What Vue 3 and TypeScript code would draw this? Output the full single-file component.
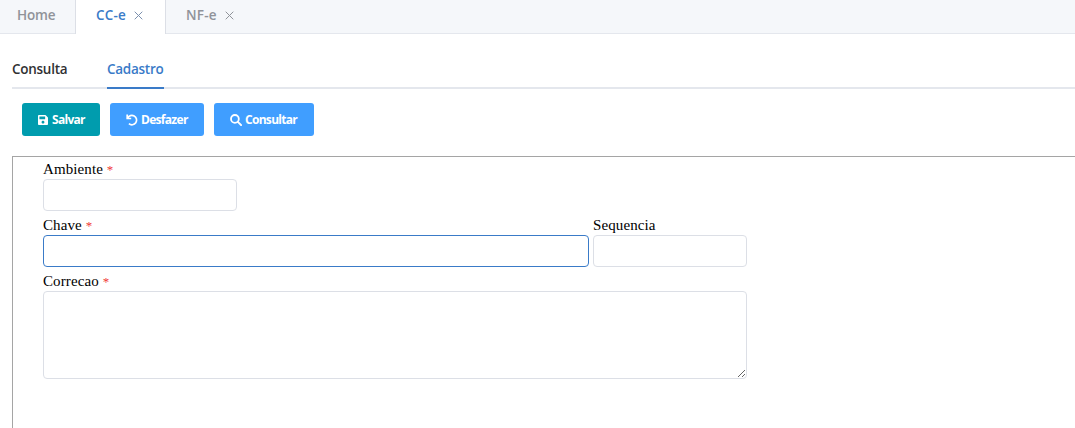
<script setup lang="ts">
import { ref } from 'vue'

const ambiente = ref('')
const chave = ref('')
const sequencia = ref('')
const correcao = ref('')
</script>

<template>
  <div class="page">
    <nav class="window-tabs">
      <a class="window-tab home"><span>Home</span></a>
      <a class="window-tab cce active">
        <span>CC-e</span>
        <svg class="close" viewBox="0 0 9 9"><path d="M.7.7l7.6 7.6M8.3.7L.7 8.3" /></svg>
      </a>
      <a class="window-tab nfe">
        <span>NF-e</span>
        <svg class="close" viewBox="0 0 9 9"><path d="M.7.7l7.6 7.6M8.3.7L.7 8.3" /></svg>
      </a>
    </nav>
    <nav class="sub-tabs">
      <a class="sub-tab consulta">Consulta</a>
      <a class="sub-tab cadastro active">Cadastro</a>
    </nav>
    <div class="toolbar">
      <button class="btn save">
        <svg viewBox="0 0 448 512"><path fill="currentColor" d="M433.9 129.9l-83.9-83.9A48 48 0 0 0 316.1 32H48C21.5 32 0 53.5 0 80v352c0 26.500 21.500 48 48 48h352c26.500 0 48-21.500 48-48V163.900a48 48 0 0 0-14.100-34zM224 416c-35.300 0-64-28.700-64-64s28.700-64 64-64 64 28.700 64 64-28.700 64-64 64zm96-304.500V212c0 6.600-5.400 12-12 12H76c-6.600 0-12-5.400-12-12V108c0-6.600 5.400-12 12-12h228.500c3.200 0 6.200 1.300 8.500 3.500l3.500 3.500a12 12 0 0 1 3.500 8.500z" /></svg>
        <span>Salvar</span>
      </button>
      <button class="btn undo">
        <svg viewBox="0 0 12 12"><path d="M1.200 .5v4h4M1.600 4.200A4.700 4.700 0 1 1 2.900 9.700" fill="none" stroke="currentColor" stroke-width="1.700" /></svg>
        <span>Desfazer</span>
      </button>
      <button class="btn search">
        <svg viewBox="0 0 12 12"><circle cx="4.900" cy="4.900" r="3.900" fill="none" stroke="currentColor" stroke-width="1.800" /><path d="M7.900 7.900l3.200 3.200" stroke="currentColor" stroke-width="2" stroke-linecap="round" /></svg>
        <span>Consultar</span>
      </button>
    </div>
    <form class="panel">
      <label class="field ambiente">
        <span class="caption"><span class="word">Ambiente</span> <i>*</i></span>
        <input v-model="ambiente" />
      </label>
      <div class="row">
        <label class="field chave">
          <span class="caption"><span class="word">Chave</span> <i>*</i></span>
          <input v-model="chave" class="focused" />
        </label>
        <label class="field sequencia">
          <span class="caption"><span class="word">Sequencia</span></span>
          <input v-model="sequencia" />
        </label>
      </div>
      <label class="field correcao">
        <span class="caption"><span class="word">Correcao</span> <i>*</i></span>
        <textarea v-model="correcao"></textarea>
      </label>
    </form>
  </div>
</template>

<style>
body {
  margin: 0;
  background: #fff;
}
</style>

<style scoped>
* {
  box-sizing: border-box;
}
.page {
  height: 428px;
  overflow: hidden;
  font-family: "Open Sans", "Noto Sans", sans-serif;
}
.window-tabs {
  display: flex;
  height: 34px;
  background: #f5f7fa;
  border-bottom: 1px solid #e4e7ed;
}
.window-tab {
  display: flex;
  align-items: center;
  height: 34px;
  padding-bottom: 4px;
  font-size: 13.5px;
  font-weight: 600;
  line-height: 20px;
  color: #909399;
}
.home {
  width: 75px;
  padding-left: 17px;
  letter-spacing: -0.2px;
}
.cce {
  width: 91px;
  padding-left: 20px;
}
.nfe {
  padding-left: 20px;
  letter-spacing: 0.2px;
}
.window-tab.active {
  color: #3a7bc8;
  background: #fff;
  border-left: 1px solid #dcdfe6;
  border-right: 1px solid #dcdfe6;
  letter-spacing: 0.2px;
}
.close {
  width: 9px;
  height: 9px;
  margin-left: 8px;
  fill: none;
  stroke: #909399;
  stroke-width: 1;
}
.active .close {
  stroke: #7b8fae;
}
.sub-tabs {
  display: flex;
  gap: 40px;
  height: 40px;
  margin: 15px 0 0 12px;
  box-shadow: inset 0 -2px #e4e7ed;
}
.sub-tab {
  height: 40px;
  line-height: 40px;
  font-size: 13.5px;
  font-weight: 600;
  letter-spacing: -0.27px;
  color: #303133;
}
.consulta {
  width: 55px;
}
.cadastro {
  width: 57px;
}
.sub-tab.active {
  color: #3a7bc8;
  border-bottom: 2px solid #3a7bc8;
}
.toolbar {
  display: flex;
  gap: 10px;
  padding: 14px 0 20px 22px;
}
.btn {
  display: flex;
  align-items: center;
  height: 33px;
  padding: 0 0 0 16px;
  border: 0;
  border-radius: 3px;
  background: #409eff;
  color: #fff;
  font-family: inherit;
  font-size: 12px;
  font-weight: 700;
  letter-spacing: -0.7px;
  white-space: nowrap;
}
.btn svg {
  width: 12px;
  height: 12px;
  flex: none;
  margin-right: 3px;
}
.btn.save {
  width: 78px;
  background: #009cae;
}
.btn.save svg {
  width: 10px;
  margin-right: 4px;
}
.undo {
  width: 94px;
}
.search {
  width: 100px;
}
.panel {
  height: 280px;
  margin-left: 12px;
  padding: 4px 0 0 30px;
  border-top: 1px solid #a5a5a5;
  border-left: 1px solid #a5a5a5;
}
.row {
  display: flex;
  gap: 4px;
}
.field {
  display: block;
  height: 56px;
}
.caption {
  display: block;
  height: 18px;
  line-height: 16px;
  font-family: "Liberation Serif", serif;
  font-size: 15px;
  letter-spacing: 0.1px;
  color: #000;
}
.caption i {
  font-style: normal;
  font-size: 13px;
  line-height: 1;
  color: #f03535;
}
input,
textarea {
  display: block;
  width: 100%;
  height: 32px;
  margin: 0;
  border: 1px solid #dcdfe6;
  border-radius: 4px;
  background: #fff;
  outline: 0;
}
input.focused {
  border-color: #3a7bc8;
}
textarea {
  height: 88px;
  resize: both;
}
.ambiente {
  width: 194px;
}
.chave {
  width: 546px;
}
.sequencia {
  width: 154px;
}
.correcao {
  width: 704px;
}
</style>
